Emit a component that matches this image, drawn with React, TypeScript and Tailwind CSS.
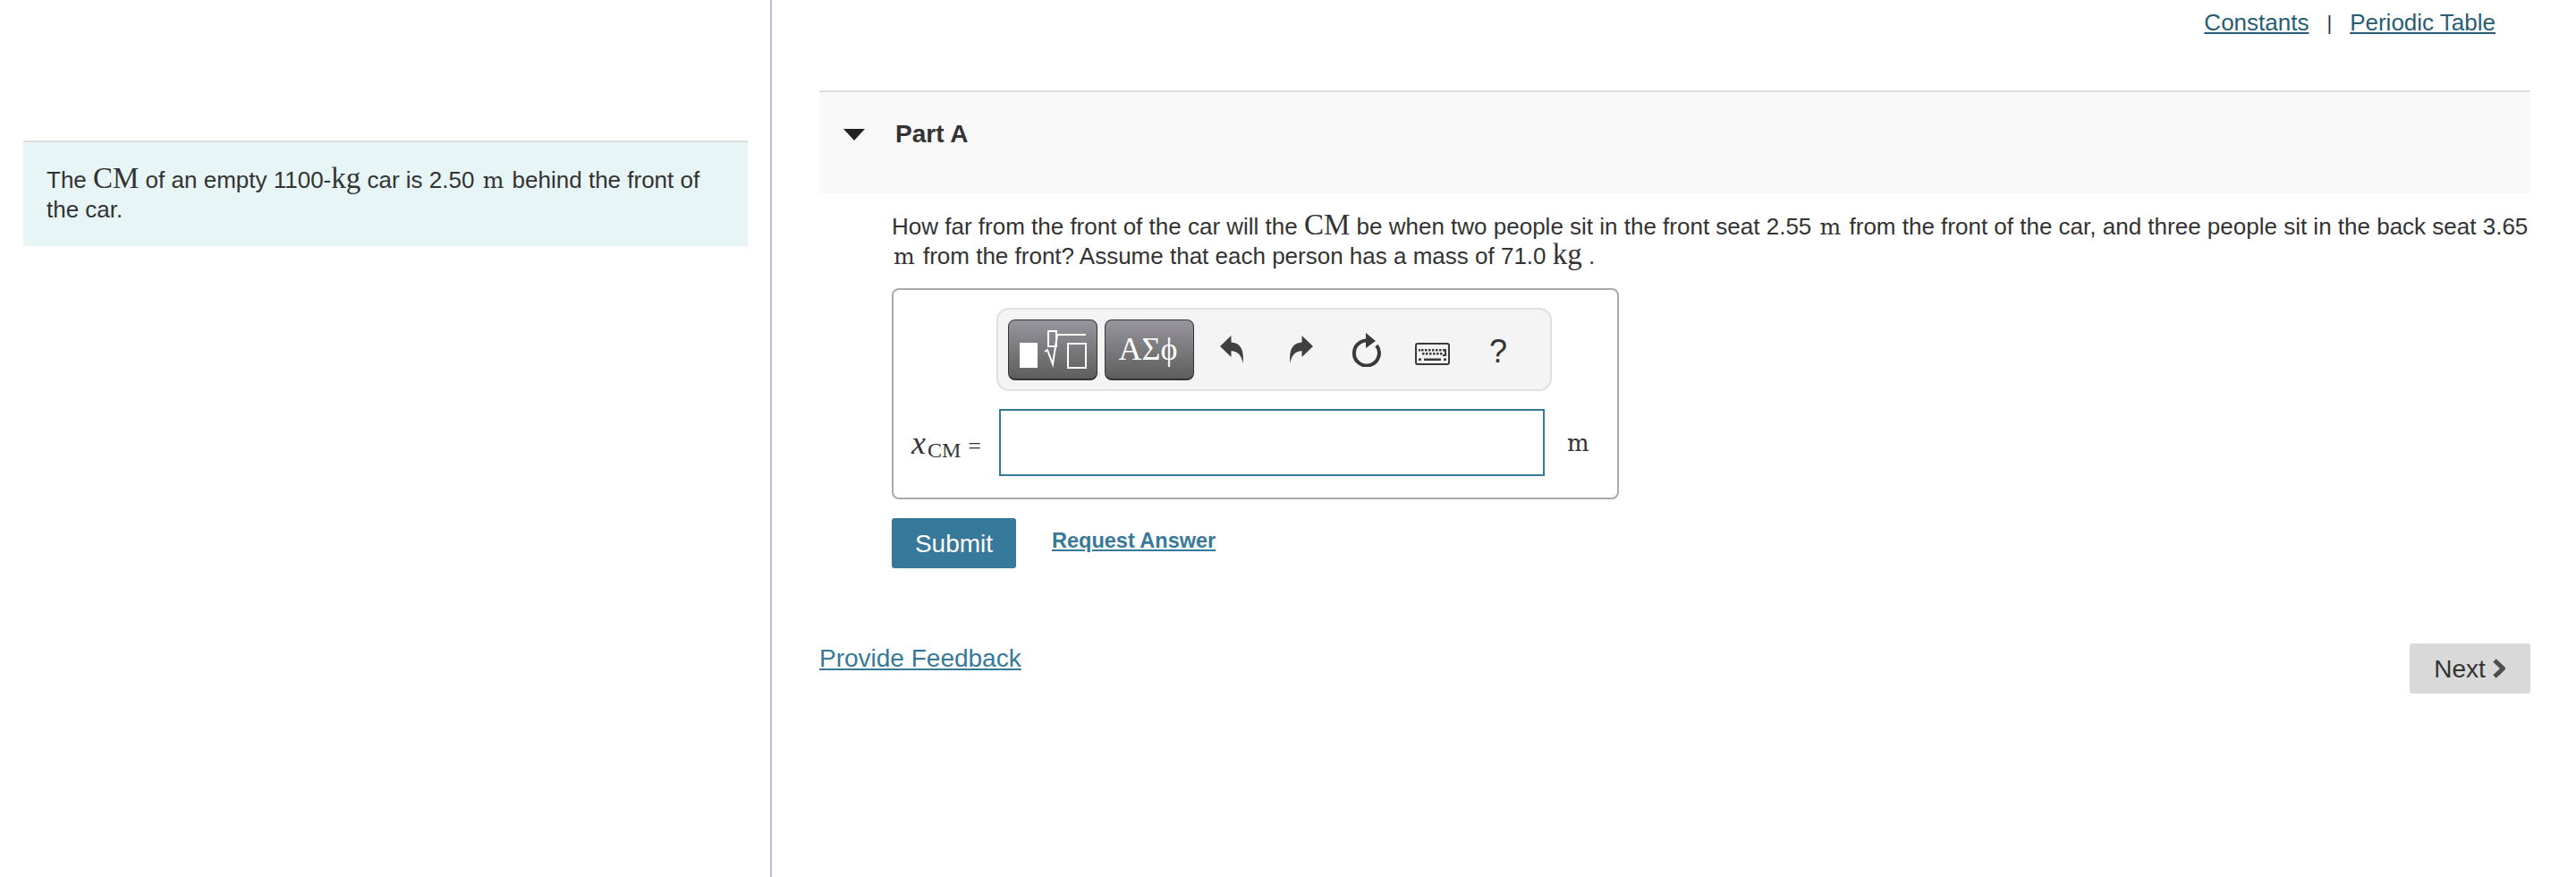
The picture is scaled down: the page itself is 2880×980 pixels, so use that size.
import React from 'react';

const sans = { fontFamily: '"Liberation Sans", Arial, sans-serif' };

function BigMath({ children }: { children: React.ReactNode }) {
  return <span className="font-['Liberation_Serif',serif] text-[33px] leading-[0]">{children}</span>;
}

// the metre sign is wider in the reference, DejaVu Serif has that width
function Metre() {
  return <span className="mx-[2px] font-['DejaVu_Serif',serif] text-[25px] leading-[0]">m</span>;
}

function UndoIcon({ flip = false }: { flip?: boolean }) {
  return (
    <svg width="27" height="31" viewBox="0 0 27 31" className={flip ? '-scale-x-100' : ''}>
      <path d="M0 12 L12.5 0 V7.5 C22 8 27.5 15 25.5 31 C24 22 20 17.5 12.5 17 V24 Z" fill="#404040" />
    </svg>
  );
}

function ResetIcon() {
  return (
    <svg width="34" height="38" viewBox="0 0 34 38">
      <path d="M22 9.5 A14 14 0 1 0 28 14" fill="none" stroke="#3a3a3a" strokeWidth="4" />
      <path d="M16 0 L27 9 L16 17 Z" fill="#3a3a3a" />
    </svg>
  );
}

function KeyboardIcon() {
  const keys = [];
  for (let i = 0; i < 7; i++) keys.push(<rect key={`a${i}`} x={7 + i * 4} y="7" width="2.5" height="2.5" />);
  for (let i = 0; i < 6; i++) keys.push(<rect key={`b${i}`} x={8 + i * 4} y="11" width="2.5" height="2.5" />);
  return (
    <svg width="39" height="25" viewBox="0 0 39 25">
      <rect x="1" y="1" width="37" height="23" rx="2" fill="#f4f4f4" stroke="#3a3a3a" strokeWidth="2" />
      <g fill="#3a3a3a">
        {keys}
        <path d="M33 7 h2 v8 h-4 v-2 h2 Z" />
        <rect x="4" y="7" width="2" height="2.5" />
        <rect x="4" y="17.5" width="3" height="2.5" />
        <rect x="10" y="17.5" width="19" height="2.5" />
        <rect x="32" y="17.5" width="3" height="2.5" />
      </g>
    </svg>
  );
}

function TemplatesIcon() {
  return (
    <svg width="75" height="43" viewBox="0 0 75 43">
      <rect x="0" y="14" width="20" height="28" fill="#fff" />
      <rect x="32" y="1" width="9" height="17" fill="none" stroke="#fff" strokeWidth="2" />
      <path d="M28 24 L31 22 L37 38 L42 5 H74" fill="none" stroke="#fff" strokeWidth="2" />
      <rect x="54" y="15" width="20" height="27" fill="none" stroke="#fff" strokeWidth="2" />
    </svg>
  );
}

function ToolButton({ children }: { children: React.ReactNode }) {
  return (
    <div className="flex h-[68px] w-[100px] items-center justify-center rounded-[8px] border border-b-[2px] border-[#333] bg-linear-to-b from-[#98969d] to-[#5e5e5e]">
      {children}
    </div>
  );
}

export default function App() {
  return (
    <div className="flex h-[980px] w-[2880px] bg-white text-[26px] leading-[33px] text-[#333]" style={sans}>
      <div className="h-full w-[863px] shrink-0 border-r-2 border-[#b4c4de] pl-[26px] pr-[25px] pt-[157px]">
        <div className="h-[118px] border-t-2 border-[#dedede] bg-[#e7f5f6] px-[26px] pt-[26px]">
          The <BigMath>CM</BigMath> of an empty 1100-<BigMath>kg</BigMath> car is 2.50 <Metre /> behind the front of the car.
        </div>
      </div>

      <div className="flex-1 pl-[53px] pr-[51px]">
        <div className="flex h-[101px] justify-end gap-[20px] pr-[39px] pt-[9px] text-[#275d73]">
          <a className="underline">Constants</a>
          <span className="text-[22px] text-[#333]">|</span>
          <a className="underline">Periodic Table</a>
        </div>

        <div className="flex h-[115px] items-start gap-[34px] border-t-2 border-[#dedede] bg-[#f9f9f9] pl-[27px] pt-[30px]">
          <svg width="24" height="13" viewBox="0 0 24 13" className="mt-[11px]">
            <path d="M0 0 H24 L12 13 Z" fill="#222" />
          </svg>
          <h2 className="text-[28px] font-bold">Part A</h2>
        </div>

        <div className="pl-[81px]">
          <p className="mt-[21px] whitespace-nowrap">
            How far from the front of the car will the <BigMath>CM</BigMath> be when two people sit in the front seat 2.55 <Metre /> from the front of the car, and three people sit in the back seat 3.65
            <br />
            <Metre /> from the front? Assume that each person has a mass of 71.0 <BigMath>kg</BigMath> .
          </p>

          <div className="mt-[19px] h-[236px] w-[813px] rounded-[8px] border-2 border-[#aaa] pt-[20px]">
            <div className="ml-[115px] flex h-[93px] w-[621px] items-center rounded-[14px] border-2 border-[#e0e0e0] bg-[#f4f4f4] pl-[11px]">
              <ToolButton><TemplatesIcon /></ToolButton>
              <div className="ml-[8px]">
                <ToolButton>
                  <span className="-ml-[3px] font-['Liberation_Serif',serif] text-[36px] leading-none text-white">ΑΣϕ</span>
                </ToolButton>
              </div>
              <div className="ml-[29px]"><UndoIcon /></div>
              <div className="ml-[50px]"><UndoIcon flip /></div>
              <div className="ml-[43px]"><ResetIcon /></div>
              <div className="ml-[37px] mt-[10px]"><KeyboardIcon /></div>
              <span className="ml-[44px] mt-[4px] text-[36px] leading-none">?</span>
            </div>

            <div className="mt-[20px] flex items-center">
              <div className="flex w-[118px] items-baseline whitespace-nowrap pl-[20px] font-['Liberation_Serif',serif] leading-none">
                <i className="text-[36px]">x</i>
                <span className="ml-[2px] translate-y-[4px] text-[24px]">CM</span>
                <span className="ml-[8px] text-[26px]">=</span>
              </div>
              <div className="h-[75px] w-[610px] border-2 border-[#37799b] bg-white" />
              <span className="ml-[25px] font-['DejaVu_Serif',serif] text-[26px] leading-none">m</span>
            </div>
          </div>

          <div className="mt-[21px] flex items-start gap-[40px]">
            <button className="h-[56px] w-[139px] rounded-[3px] bg-[#37799b] text-[28px] text-white">Submit</button>
            <a className="mt-[9px] text-[23.5px] font-bold text-[#37799b] underline">Request Answer</a>
          </div>
        </div>

        <div className="mt-[84px] flex items-start justify-between">
          <a className="text-[28px] text-[#37799b] underline">Provide Feedback</a>
          <button className="flex h-[56px] w-[135px] items-center justify-center gap-[7px] rounded-[3px] bg-[#d9d9d9] text-[28px] text-[#333]">
            Next
            <svg width="16" height="24" viewBox="0 0 16 24">
              <path d="M3 3 L12.5 12 L3 21" fill="none" stroke="#4d4d4d" strokeWidth="5" strokeLinejoin="round" />
            </svg>
          </button>
        </div>
      </div>
    </div>
  );
}
